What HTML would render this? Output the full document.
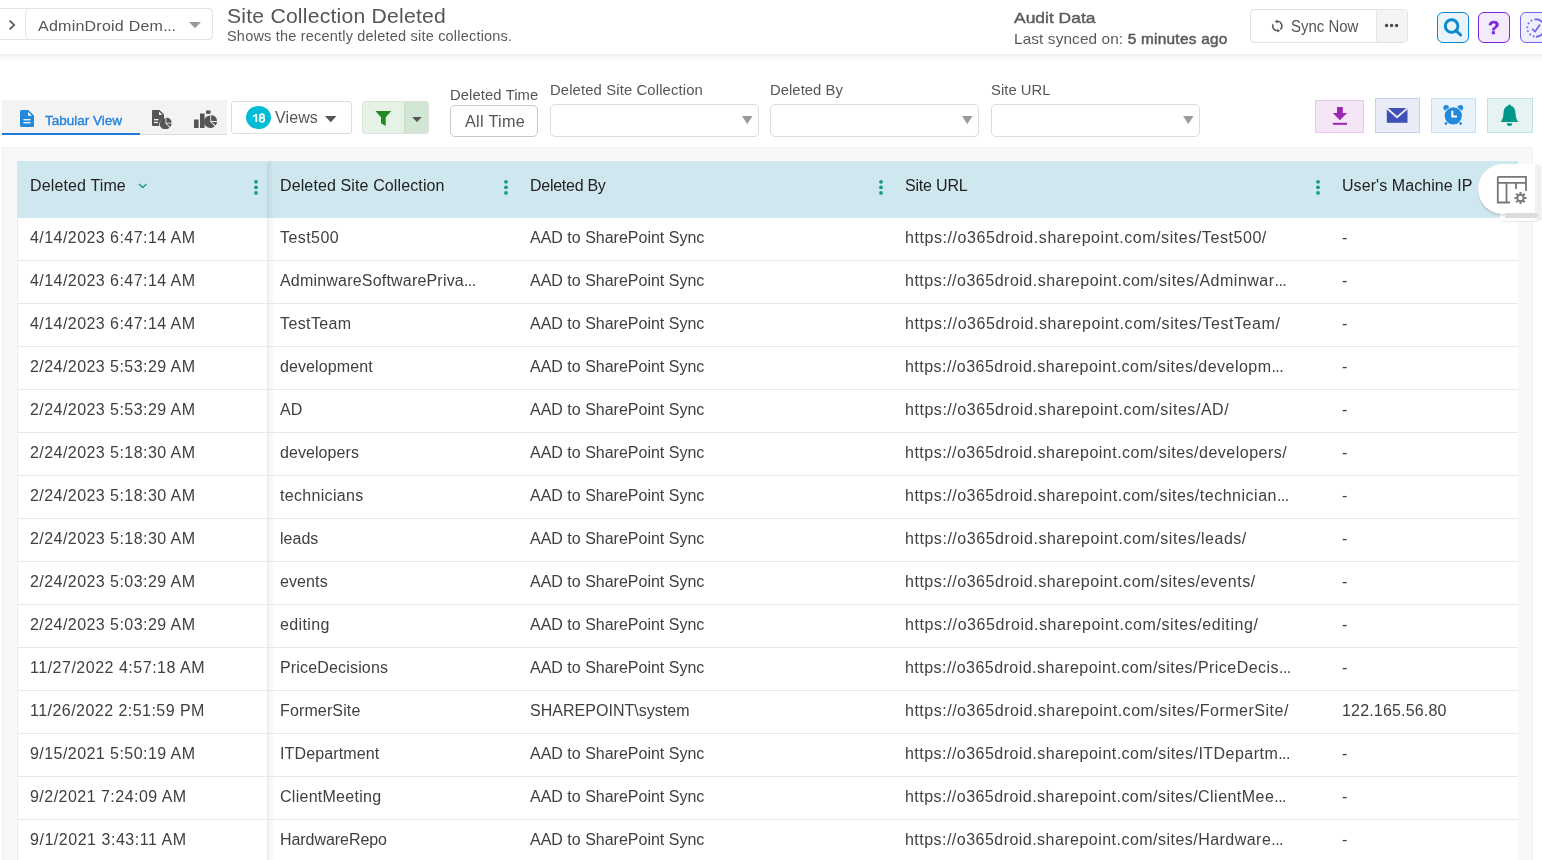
<!DOCTYPE html>
<html><head><meta charset="utf-8">
<style>
*{box-sizing:border-box;margin:0;padding:0}
html,body{width:1542px;height:860px;overflow:hidden;background:#fff;font-family:"Liberation Sans",sans-serif;color:#555}
.a{position:absolute}
.t{position:absolute;white-space:nowrap;line-height:1;will-change:transform}
</style></head><body>
<div class="a" style="left:0px;top:54px;width:1542px;height:8px;background:linear-gradient(#ebebeb,#f3f3f3 25%,#fafafa 60%,#fff)"></div>
<div class="a" style="left:-6px;top:8px;width:219px;height:32px;border:1px solid #e2e2e2;border-radius:4px"></div>
<div class="a" style="left:25px;top:8px;width:188px;height:32px;border:1px solid #e2e2e2;border-radius:5px;background:#fff"></div>
<svg class="a" style="left:7px;top:19px" width="10" height="12" viewBox="0 0 10 12"><path d="M2.6 1.6 L7.2 6 L2.6 10.4" stroke="#555" stroke-width="1.7" fill="none"/></svg>
<div class="t" style="left:38px;top:18.30px;font-size:15px;color:#555;letter-spacing:0.2px"><span style="display:inline-block;transform:scaleX(1.07);transform-origin:0 0">AdminDroid Dem<span style="letter-spacing:-0.3px">...</span></span></div>
<svg class="a" style="left:189px;top:22px" width="12" height="7" viewBox="0 0 12 7"><path d="M0 0H12L6 6.3Z" fill="#9a9a9a"/></svg>
<div class="t" style="left:227px;top:6.07px;font-size:20px;color:#555;letter-spacing:0.2px"><span style="display:inline-block;transform:scaleX(1.058);transform-origin:0 0">Site Collection Deleted</span></div>
<div class="t" style="left:227px;top:28.72px;font-size:14.5px;color:#5a5a5a;letter-spacing:0.2px">Shows the recently deleted site collections.</div>
<div class="t" style="left:1014px;top:9.68px;font-size:15.5px;color:#5a5a5a;-webkit-text-stroke:0.4px #5a5a5a"><span style="display:inline-block;transform:scaleX(1.125);transform-origin:0 0">Audit Data</span></div>
<div class="t" style="left:1014px;top:32.02px;font-size:14.5px;color:#5a5a5a;letter-spacing:0.1px"><span style="display:inline-block;transform:scaleX(1.06);transform-origin:0 0">Last synced on: <span style="-webkit-text-stroke:0.45px #555;letter-spacing:0.25px">5 minutes ago</span></span></div>
<div class="a" style="left:1250px;top:9px;width:158px;height:34px;border:1px solid #e2e2e2;border-radius:4px;background:#fff"></div>
<div class="a" style="left:1376px;top:10px;width:31px;height:32px;background:#f4f4f4;border-left:1px solid #e6e6e6;border-radius:0 3px 3px 0"></div>
<svg class="a" style="left:1271px;top:19px" width="13" height="15" viewBox="0 0 13 15"><path d="M5.9 2.42A4.6 4.6 0 0 1 9.26 10.52" stroke="#555" stroke-width="1.45" fill="none"/><path d="M3.7 2.6L6.7 0.8V4.4Z" fill="#555"/><path d="M2.03 5.28A4.6 4.6 0 0 0 6.62 11.59" stroke="#555" stroke-width="1.45" fill="none"/><path d="M9.2 11.7L6.2 9.9V13.5Z" fill="#555"/></svg>
<div class="t" style="left:1291px;top:19.45px;font-size:16px;color:#555"><span style="display:inline-block;transform:scaleX(0.935);transform-origin:0 0">Sync Now</span></div>
<svg class="a" style="left:1384px;top:22px" width="15" height="7" viewBox="0 0 15 7"><circle cx="2.6" cy="3.5" r="1.65" fill="#444"/><circle cx="7.6" cy="3.5" r="1.65" fill="#444"/><circle cx="12.6" cy="3.5" r="1.65" fill="#444"/></svg>
<div class="a" style="left:1437px;top:12px;width:32px;height:31px;border:1.6px solid #0a88d2;border-radius:6px;background:#e8f3fa"></div>
<svg class="a" style="left:1443px;top:17px" width="20" height="20" viewBox="0 0 20 20"><circle cx="8.6" cy="9.1" r="6.3" stroke="#0a88d2" stroke-width="2.9" fill="none"/><path d="M13.3 13.9 L17.6 18" stroke="#0a88d2" stroke-width="3" stroke-linecap="round"/></svg>
<div class="a" style="left:1478px;top:12px;width:32px;height:31px;border:1.6px solid #7a24dc;border-radius:6px;background:#f3ebfc"></div>
<div class="t" style="left:1488px;top:17.51px;font-size:19px;color:#7a24dc;font-weight:bold;-webkit-text-stroke:0.4px #7a24dc">?</div>
<div class="a" style="left:1520px;top:12px;width:32px;height:31px;border:1.6px solid #6e66ee;border-radius:6px;background:#f0effd"></div>
<svg class="a" style="left:1526px;top:18.3px" width="20" height="20" viewBox="0 0 20 20"><path d="M10 1.3A8.7 8.7 0 0 0 10 18.7" stroke="#6e66ee" stroke-width="1.7" fill="none" stroke-dasharray="1.7 2.3"/><path d="M10 1.3A8.7 8.7 0 0 1 18.7 10" stroke="#6e66ee" stroke-width="1.9" fill="none"/><path d="M10 18.7A8.7 8.7 0 0 0 17 15" stroke="#6e66ee" stroke-width="1.9" fill="none"/><path d="M6 10.9 L9.1 13.6 L14 6.5" stroke="#6e66ee" stroke-width="1.7" fill="none"/></svg>
<div class="a" style="left:2px;top:100px;width:225px;height:35px;background:#f3f3f3"></div>
<div class="a" style="left:140px;top:134px;width:87px;height:1px;background:#dcdcdc"></div>
<div class="a" style="left:2px;top:133px;width:138px;height:2px;background:#1e7ad6"></div>
<svg class="a" style="left:20px;top:110px" width="14" height="17" viewBox="0 0 14 17"><path d="M1.5 0H8.3L14 5.6V15.5Q14 17 12.5 17H1.5Q0 17 0 15.5V1.5Q0 0 1.5 0Z" fill="#2389dd"/><path d="M8 1.8V5.8H12Z" fill="#f3f3f3"/><rect x="3.5" y="9" width="7" height="1.4" fill="#f3f3f3"/><rect x="3.5" y="12" width="7" height="1.4" fill="#f3f3f3"/></svg>
<div class="t" style="left:45px;top:113.57px;font-size:13.5px;color:#1f80dc;-webkit-text-stroke:0.35px #1f80dc">Tabular View</div>
<svg class="a" style="left:152px;top:110px" width="20" height="19" viewBox="0 0 20 19"><path d="M1 0H7.5L12 4.5V8.8A6 6 0 0 0 7.2 16H1Q0 16 0 15V1Q0 0 1 0Z" fill="#555"/><path d="M7 1.5V5H10.5Z" fill="#f3f3f3"/><rect x="2" y="9" width="4.5" height="1.3" fill="#f3f3f3"/><rect x="2" y="11.8" width="4" height="1.3" fill="#f3f3f3"/><path d="M13.5 13.5V8.2A5.6 5.6 0 1 0 17.5 17.5Z" fill="#555"/><path d="M14.3 7.5A5.6 5.6 0 0 1 19.6 12.7H14.3Z" fill="#555"/><path d="M14.6 13.6H19.6A5.6 5.6 0 0 1 18.3 17Z" fill="#555"/></svg>
<svg class="a" style="left:193px;top:109.8px" width="26" height="19" viewBox="0 0 26 19"><rect x="1" y="9.5" width="4.6" height="8.5" fill="#555"/><rect x="7" y="3.5" width="4.6" height="14.5" fill="#555"/><rect x="13" y="0.5" width="4.6" height="3.3" fill="#555"/><path d="M17.3 11.8V5.6A6.2 6.2 0 1 0 21.6 16.2Z" fill="#555"/><path d="M18.2 5A6.2 6.2 0 0 1 24 10.9H18.2Z" fill="#555"/><path d="M18.6 11.9H24A6.2 6.2 0 0 1 22.5 15.6Z" fill="#555"/></svg>
<div class="a" style="left:231px;top:101px;width:121px;height:33px;border:1px solid #dedede;border-radius:3px;background:#fff"></div>
<div class="a" style="left:246px;top:105.5px;width:25px;height:23px;border-radius:50%;background:#00bcd6"></div>
<svg class="a" style="left:252px;top:113px" width="15" height="10" viewBox="0 0 15 10"><path d="M0.9 2.4L3.7 0.9H5.2V9H3.4V3.1L0.9 4.2Z" fill="#fff"/><ellipse cx="10" cy="3" rx="2" ry="1.85" stroke="#fff" stroke-width="1.7" fill="none"/><ellipse cx="10" cy="6.75" rx="2.35" ry="2.05" stroke="#fff" stroke-width="1.7" fill="none"/></svg>
<div class="t" style="left:275px;top:110.45px;font-size:16px;color:#555;letter-spacing:0.1px">Views</div>
<svg class="a" style="left:325px;top:116px" width="12" height="7" viewBox="0 0 12 7"><path d="M0 0H11.5L5.75 6.2Z" fill="#555"/></svg>
<div class="a" style="left:362px;top:101px;width:67px;height:33px;background:#e5f2e5;border-radius:3px;border:1px solid #dde2dd"></div>
<div class="a" style="left:404px;top:102px;width:24px;height:31px;background:#d2e7d3;border-radius:0 2px 2px 0;border-left:1px solid #c9dcca"></div>
<svg class="a" style="left:374px;top:110px" width="18" height="17" viewBox="0 0 18 17"><path d="M1.4 1.1H17.3L11.7 7.2V16L7 13.2V7.2Z" fill="#228a22"/></svg>
<svg class="a" style="left:411px;top:116px" width="12" height="7" viewBox="0 0 12 7"><path d="M1.1 0.9H10.9L6 5.9Z" fill="#555"/></svg>
<div class="t" style="left:450px;top:88.47px;font-size:14.8px;color:#555;letter-spacing:0.1px">Deleted Time</div>
<div class="a" style="left:450px;top:105px;width:88px;height:32px;border:1px solid #c8c8c8;border-radius:5px;background:#fff"></div>
<div class="t" style="left:465px;top:113.29px;font-size:16.2px;color:#555;letter-spacing:0.3px">All Time</div>
<div class="t" style="left:550px;top:83.47px;font-size:14.8px;color:#555;letter-spacing:0.14px">Deleted Site Collection</div>
<div class="a" style="left:550px;top:104px;width:209px;height:33px;border:1px solid #dcdcdc;border-radius:5px;background:#fff"></div>
<svg class="a" style="left:742px;top:116px" width="11" height="8" viewBox="0 0 11 8"><path d="M0 0H10.5L5.25 8Z" fill="#9a9a9a"/></svg>
<div class="t" style="left:770.3px;top:83.47px;font-size:14.8px;color:#555;letter-spacing:0.05px">Deleted By</div>
<div class="a" style="left:770px;top:104px;width:209px;height:33px;border:1px solid #dcdcdc;border-radius:5px;background:#fff"></div>
<svg class="a" style="left:962px;top:116px" width="11" height="8" viewBox="0 0 11 8"><path d="M0 0H10.5L5.25 8Z" fill="#9a9a9a"/></svg>
<div class="t" style="left:990.5px;top:83.47px;font-size:14.8px;color:#555;letter-spacing:0.05px">Site URL</div>
<div class="a" style="left:991px;top:104px;width:209px;height:33px;border:1px solid #dcdcdc;border-radius:5px;background:#fff"></div>
<svg class="a" style="left:1183px;top:116px" width="11" height="8" viewBox="0 0 11 8"><path d="M0 0H10.5L5.25 8Z" fill="#9a9a9a"/></svg>
<div class="a" style="left:1315px;top:100px;width:49px;height:33px;background:#f5e6f7;border:1px solid #e9c8ee"></div>
<svg class="a" style="left:1332px;top:106px" width="16" height="20" viewBox="0 0 16 20"><path d="M5 1H10.8V7H15L7.9 14.2L0.8 7H5Z" fill="#9c27b0"/><rect x="0.8" y="16.8" width="14.2" height="2" fill="#9c27b0"/></svg>
<div class="a" style="left:1375px;top:98px;width:45px;height:35px;background:#e9ebf6;border:1px solid #cbcfec"></div>
<svg class="a" style="left:1386px;top:107px" width="22" height="17" viewBox="0 0 22 17"><path d="M0.8 1H21.5V15.8H0.8Z" fill="#3f51b5"/><path d="M0.8 1.2L11.1 10.2L21.5 1.2" stroke="#e9ebf6" stroke-width="1.9" fill="none"/></svg>
<div class="a" style="left:1431px;top:98px;width:45px;height:35px;background:#e8f2fb;border:1px solid #c6e0f4"></div>
<svg class="a" style="left:1443px;top:104px" width="21" height="22" viewBox="0 0 21 22"><circle cx="3.2" cy="3.8" r="2.8" fill="#2389dd"/><circle cx="17.4" cy="3.8" r="2.8" fill="#2389dd"/><circle cx="10.3" cy="11.8" r="9.4" fill="#e8f2fb"/><circle cx="10.3" cy="11.8" r="8.6" fill="#2389dd"/><circle cx="10.3" cy="11.6" r="7.2" fill="none" stroke="#e8f2fb" stroke-width="0"/><path d="M3.8 18.5L2.2 20.5M16.8 18.5L18.4 20.5" stroke="#2389dd" stroke-width="2.2"/><path d="M9.3 6.8V12.4H14" stroke="#fff" stroke-width="2" fill="none"/></svg>
<div class="a" style="left:1487px;top:98px;width:46px;height:35px;background:#e5f3f2;border:1px solid #c0e1dd"></div>
<svg class="a" style="left:1499px;top:103.6px" width="21" height="24" viewBox="0 0 21 24"><path d="M10.5 0.5C11.3 0.5 11.7 1 11.8 1.8C15.2 2.6 16.3 5.6 16.5 9C16.7 13 17.2 15 19.3 18H1.7C3.8 15 4.3 13 4.5 9C4.7 5.6 5.8 2.6 9.2 1.8C9.3 1 9.7 0.5 10.5 0.5Z" fill="#00968a"/><path d="M7.8 19.3H13.2A2.7 2.7 0 0 1 7.8 19.3Z" fill="#00968a"/></svg>
<div class="a" style="left:2px;top:147px;width:1531px;height:713px;background:#f7f8f9;border-top:1px solid #f0f1f1;border-left:1px solid #f0f1f1;border-right:1px solid #f0f1f1"></div>
<div class="a" style="left:17px;top:161px;width:1501px;height:57px;background:#cfe7ee"></div>
<div class="a" style="left:17px;top:218px;width:1501px;height:642px;background:#fff"></div>
<div class="a" style="left:17px;top:218px;width:1px;height:642px;background:#ececec"></div>
<div class="a" style="left:268px;top:161px;width:6px;height:699px;background:linear-gradient(90deg,rgba(0,0,0,0.06),rgba(0,0,0,0))"></div>
<div class="a" style="left:267px;top:163px;width:1px;height:697px;background:rgba(0,0,0,0.07)"></div>
<div class="t" style="left:30px;top:178.45px;font-size:16px;color:#222;letter-spacing:0.136px">Deleted Time</div>
<div class="t" style="left:280px;top:178.45px;font-size:16px;color:#222;letter-spacing:0.118px">Deleted Site Collection</div>
<div class="t" style="left:530px;top:178.45px;font-size:16px;color:#222;letter-spacing:-0.267px">Deleted By</div>
<div class="t" style="left:905px;top:178.45px;font-size:16px;color:#222;letter-spacing:-0.186px">Site URL</div>
<div class="t" style="left:1342px;top:178.45px;font-size:16px;color:#222;letter-spacing:0.069px">User's Machine IP</div>
<svg class="a" style="left:137px;top:182px" width="11" height="8" viewBox="0 0 11 8"><path d="M2 1.9L5.7 5.6L9.4 1.9" stroke="#16978c" stroke-width="1.35" fill="none"/></svg>
<svg class="a" style="left:253.2px;top:178px" width="6" height="18" viewBox="0 0 6 18"><circle cx="3" cy="3.8" r="1.9" fill="#16978c"/><circle cx="3" cy="9.3" r="1.9" fill="#16978c"/><circle cx="3" cy="14.9" r="1.9" fill="#16978c"/></svg>
<svg class="a" style="left:503.2px;top:178px" width="6" height="18" viewBox="0 0 6 18"><circle cx="3" cy="3.8" r="1.9" fill="#16978c"/><circle cx="3" cy="9.3" r="1.9" fill="#16978c"/><circle cx="3" cy="14.9" r="1.9" fill="#16978c"/></svg>
<svg class="a" style="left:878.2px;top:178px" width="6" height="18" viewBox="0 0 6 18"><circle cx="3" cy="3.8" r="1.9" fill="#16978c"/><circle cx="3" cy="9.3" r="1.9" fill="#16978c"/><circle cx="3" cy="14.9" r="1.9" fill="#16978c"/></svg>
<svg class="a" style="left:1315.2px;top:178px" width="6" height="18" viewBox="0 0 6 18"><circle cx="3" cy="3.8" r="1.9" fill="#16978c"/><circle cx="3" cy="9.3" r="1.9" fill="#16978c"/><circle cx="3" cy="14.9" r="1.9" fill="#16978c"/></svg>
<div class="a" style="left:17px;top:260px;width:1501px;height:1px;background:#e8e8e8"></div>
<div class="t" style="left:30px;top:230.45px;font-size:16px;color:#404040;letter-spacing:0.447px">4/14/2023 6:47:14 AM</div>
<div class="t" style="left:280px;top:230.45px;font-size:16px;color:#404040;letter-spacing:0.433px">Test500</div>
<div class="t" style="left:530px;top:230.45px;font-size:16px;color:#404040;letter-spacing:0.000px">AAD to SharePoint Sync</div>
<div class="t" style="left:905px;top:230.45px;font-size:16px;color:#404040;letter-spacing:0.565px">https://o365droid.sharepoint.com/sites/Test500/</div>
<div class="t" style="left:1342px;top:230.45px;font-size:16px;color:#404040;letter-spacing:0.000px">-</div>
<div class="a" style="left:17px;top:303px;width:1501px;height:1px;background:#e8e8e8"></div>
<div class="t" style="left:30px;top:273.45px;font-size:16px;color:#404040;letter-spacing:0.447px">4/14/2023 6:47:14 AM</div>
<div class="t" style="left:280px;top:273.45px;font-size:16px;color:#404040;letter-spacing:0.196px">AdminwareSoftwarePriva<span style="letter-spacing:-0.6px">...</span></div>
<div class="t" style="left:530px;top:273.45px;font-size:16px;color:#404040;letter-spacing:0.000px">AAD to SharePoint Sync</div>
<div class="t" style="left:905px;top:273.45px;font-size:16px;color:#404040;letter-spacing:0.503px">https://o365droid.sharepoint.com/sites/Adminwar<span style="letter-spacing:-0.6px">...</span></div>
<div class="t" style="left:1342px;top:273.45px;font-size:16px;color:#404040;letter-spacing:0.000px">-</div>
<div class="a" style="left:17px;top:346px;width:1501px;height:1px;background:#e8e8e8"></div>
<div class="t" style="left:30px;top:316.45px;font-size:16px;color:#404040;letter-spacing:0.447px">4/14/2023 6:47:14 AM</div>
<div class="t" style="left:280px;top:316.45px;font-size:16px;color:#404040;letter-spacing:0.386px">TestTeam</div>
<div class="t" style="left:530px;top:316.45px;font-size:16px;color:#404040;letter-spacing:0.000px">AAD to SharePoint Sync</div>
<div class="t" style="left:905px;top:316.45px;font-size:16px;color:#404040;letter-spacing:0.578px">https://o365droid.sharepoint.com/sites/TestTeam/</div>
<div class="t" style="left:1342px;top:316.45px;font-size:16px;color:#404040;letter-spacing:0.000px">-</div>
<div class="a" style="left:17px;top:389px;width:1501px;height:1px;background:#e8e8e8"></div>
<div class="t" style="left:30px;top:359.45px;font-size:16px;color:#404040;letter-spacing:0.447px">2/24/2023 5:53:29 AM</div>
<div class="t" style="left:280px;top:359.45px;font-size:16px;color:#404040;letter-spacing:0.100px">development</div>
<div class="t" style="left:530px;top:359.45px;font-size:16px;color:#404040;letter-spacing:0.000px">AAD to SharePoint Sync</div>
<div class="t" style="left:905px;top:359.45px;font-size:16px;color:#404040;letter-spacing:0.474px">https://o365droid.sharepoint.com/sites/developm<span style="letter-spacing:-0.6px">...</span></div>
<div class="t" style="left:1342px;top:359.45px;font-size:16px;color:#404040;letter-spacing:0.000px">-</div>
<div class="a" style="left:17px;top:432px;width:1501px;height:1px;background:#e8e8e8"></div>
<div class="t" style="left:30px;top:402.45px;font-size:16px;color:#404040;letter-spacing:0.447px">2/24/2023 5:53:29 AM</div>
<div class="t" style="left:280px;top:402.45px;font-size:16px;color:#404040;letter-spacing:0.100px">AD</div>
<div class="t" style="left:530px;top:402.45px;font-size:16px;color:#404040;letter-spacing:0.000px">AAD to SharePoint Sync</div>
<div class="t" style="left:905px;top:402.45px;font-size:16px;color:#404040;letter-spacing:0.540px">https://o365droid.sharepoint.com/sites/AD/</div>
<div class="t" style="left:1342px;top:402.45px;font-size:16px;color:#404040;letter-spacing:0.000px">-</div>
<div class="a" style="left:17px;top:475px;width:1501px;height:1px;background:#e8e8e8"></div>
<div class="t" style="left:30px;top:445.45px;font-size:16px;color:#404040;letter-spacing:0.447px">2/24/2023 5:18:30 AM</div>
<div class="t" style="left:280px;top:445.45px;font-size:16px;color:#404040;letter-spacing:0.067px">developers</div>
<div class="t" style="left:530px;top:445.45px;font-size:16px;color:#404040;letter-spacing:0.000px">AAD to SharePoint Sync</div>
<div class="t" style="left:905px;top:445.45px;font-size:16px;color:#404040;letter-spacing:0.493px">https://o365droid.sharepoint.com/sites/developers/</div>
<div class="t" style="left:1342px;top:445.45px;font-size:16px;color:#404040;letter-spacing:0.000px">-</div>
<div class="a" style="left:17px;top:518px;width:1501px;height:1px;background:#e8e8e8"></div>
<div class="t" style="left:30px;top:488.45px;font-size:16px;color:#404040;letter-spacing:0.447px">2/24/2023 5:18:30 AM</div>
<div class="t" style="left:280px;top:488.45px;font-size:16px;color:#404040;letter-spacing:0.320px">technicians</div>
<div class="t" style="left:530px;top:488.45px;font-size:16px;color:#404040;letter-spacing:0.000px">AAD to SharePoint Sync</div>
<div class="t" style="left:905px;top:488.45px;font-size:16px;color:#404040;letter-spacing:0.513px">https://o365droid.sharepoint.com/sites/technician<span style="letter-spacing:-0.6px">...</span></div>
<div class="t" style="left:1342px;top:488.45px;font-size:16px;color:#404040;letter-spacing:0.000px">-</div>
<div class="a" style="left:17px;top:561px;width:1501px;height:1px;background:#e8e8e8"></div>
<div class="t" style="left:30px;top:531.45px;font-size:16px;color:#404040;letter-spacing:0.447px">2/24/2023 5:18:30 AM</div>
<div class="t" style="left:280px;top:531.45px;font-size:16px;color:#404040;letter-spacing:0.025px">leads</div>
<div class="t" style="left:530px;top:531.45px;font-size:16px;color:#404040;letter-spacing:0.000px">AAD to SharePoint Sync</div>
<div class="t" style="left:905px;top:531.45px;font-size:16px;color:#404040;letter-spacing:0.541px">https://o365droid.sharepoint.com/sites/leads/</div>
<div class="t" style="left:1342px;top:531.45px;font-size:16px;color:#404040;letter-spacing:0.000px">-</div>
<div class="a" style="left:17px;top:604px;width:1501px;height:1px;background:#e8e8e8"></div>
<div class="t" style="left:30px;top:574.45px;font-size:16px;color:#404040;letter-spacing:0.447px">2/24/2023 5:03:29 AM</div>
<div class="t" style="left:280px;top:574.45px;font-size:16px;color:#404040;letter-spacing:0.100px">events</div>
<div class="t" style="left:530px;top:574.45px;font-size:16px;color:#404040;letter-spacing:0.000px">AAD to SharePoint Sync</div>
<div class="t" style="left:905px;top:574.45px;font-size:16px;color:#404040;letter-spacing:0.528px">https://o365droid.sharepoint.com/sites/events/</div>
<div class="t" style="left:1342px;top:574.45px;font-size:16px;color:#404040;letter-spacing:0.000px">-</div>
<div class="a" style="left:17px;top:647px;width:1501px;height:1px;background:#e8e8e8"></div>
<div class="t" style="left:30px;top:617.45px;font-size:16px;color:#404040;letter-spacing:0.447px">2/24/2023 5:03:29 AM</div>
<div class="t" style="left:280px;top:617.45px;font-size:16px;color:#404040;letter-spacing:0.383px">editing</div>
<div class="t" style="left:530px;top:617.45px;font-size:16px;color:#404040;letter-spacing:0.000px">AAD to SharePoint Sync</div>
<div class="t" style="left:905px;top:617.45px;font-size:16px;color:#404040;letter-spacing:0.576px">https://o365droid.sharepoint.com/sites/editing/</div>
<div class="t" style="left:1342px;top:617.45px;font-size:16px;color:#404040;letter-spacing:0.000px">-</div>
<div class="a" style="left:17px;top:690px;width:1501px;height:1px;background:#e8e8e8"></div>
<div class="t" style="left:30px;top:660.45px;font-size:16px;color:#404040;letter-spacing:0.510px">11/27/2022 4:57:18 AM</div>
<div class="t" style="left:280px;top:660.45px;font-size:16px;color:#404040;letter-spacing:0.169px">PriceDecisions</div>
<div class="t" style="left:530px;top:660.45px;font-size:16px;color:#404040;letter-spacing:0.000px">AAD to SharePoint Sync</div>
<div class="t" style="left:905px;top:660.45px;font-size:16px;color:#404040;letter-spacing:0.464px">https://o365droid.sharepoint.com/sites/PriceDecis<span style="letter-spacing:-0.6px">...</span></div>
<div class="t" style="left:1342px;top:660.45px;font-size:16px;color:#404040;letter-spacing:0.000px">-</div>
<div class="a" style="left:17px;top:733px;width:1501px;height:1px;background:#e8e8e8"></div>
<div class="t" style="left:30px;top:703.45px;font-size:16px;color:#404040;letter-spacing:0.460px">11/26/2022 2:51:59 PM</div>
<div class="t" style="left:280px;top:703.45px;font-size:16px;color:#404040;letter-spacing:0.133px">FormerSite</div>
<div class="t" style="left:530px;top:703.45px;font-size:16px;color:#404040;letter-spacing:0.025px">SHAREPOINT\system</div>
<div class="t" style="left:905px;top:703.45px;font-size:16px;color:#404040;letter-spacing:0.511px">https://o365droid.sharepoint.com/sites/FormerSite/</div>
<div class="t" style="left:1342px;top:703.45px;font-size:16px;color:#404040;letter-spacing:0.175px">122.165.56.80</div>
<div class="a" style="left:17px;top:776px;width:1501px;height:1px;background:#e8e8e8"></div>
<div class="t" style="left:30px;top:746.45px;font-size:16px;color:#404040;letter-spacing:0.447px">9/15/2021 5:50:19 AM</div>
<div class="t" style="left:280px;top:746.45px;font-size:16px;color:#404040;letter-spacing:0.127px">ITDepartment</div>
<div class="t" style="left:530px;top:746.45px;font-size:16px;color:#404040;letter-spacing:0.000px">AAD to SharePoint Sync</div>
<div class="t" style="left:905px;top:746.45px;font-size:16px;color:#404040;letter-spacing:0.476px">https://o365droid.sharepoint.com/sites/ITDepartm<span style="letter-spacing:-0.6px">...</span></div>
<div class="t" style="left:1342px;top:746.45px;font-size:16px;color:#404040;letter-spacing:0.000px">-</div>
<div class="a" style="left:17px;top:819px;width:1501px;height:1px;background:#e8e8e8"></div>
<div class="t" style="left:30px;top:789.45px;font-size:16px;color:#404040;letter-spacing:0.472px">9/2/2021 7:24:09 AM</div>
<div class="t" style="left:280px;top:789.45px;font-size:16px;color:#404040;letter-spacing:0.267px">ClientMeeting</div>
<div class="t" style="left:530px;top:789.45px;font-size:16px;color:#404040;letter-spacing:0.000px">AAD to SharePoint Sync</div>
<div class="t" style="left:905px;top:789.45px;font-size:16px;color:#404040;letter-spacing:0.468px">https://o365droid.sharepoint.com/sites/ClientMee<span style="letter-spacing:-0.6px">...</span></div>
<div class="t" style="left:1342px;top:789.45px;font-size:16px;color:#404040;letter-spacing:0.000px">-</div>
<div class="t" style="left:30px;top:832.45px;font-size:16px;color:#404040;letter-spacing:0.528px">9/1/2021 3:43:11 AM</div>
<div class="t" style="left:280px;top:832.45px;font-size:16px;color:#404040;letter-spacing:-0.055px">HardwareRepo</div>
<div class="t" style="left:530px;top:832.45px;font-size:16px;color:#404040;letter-spacing:0.000px">AAD to SharePoint Sync</div>
<div class="t" style="left:905px;top:832.45px;font-size:16px;color:#404040;letter-spacing:0.470px">https://o365droid.sharepoint.com/sites/Hardware<span style="letter-spacing:-0.6px">...</span></div>
<div class="t" style="left:1342px;top:832.45px;font-size:16px;color:#404040;letter-spacing:0.000px">-</div>
<div class="a" style="left:1500px;top:164px;width:41.5px;height:57px;border-radius:0 8px 8px 0;background:linear-gradient(90deg,#fff 0,#fff 80%,#ececec 92%,#f6f6f6);box-shadow:0.5px 0.5px 1px rgba(0,0,0,0.08)"></div>
<div class="a" style="left:1478px;top:164px;width:57px;height:50px;border-radius:25px 0 0 25px;background:#fff;box-shadow:0 2px 2px rgba(0,0,0,0.13)"></div>
<div class="a" style="left:1505px;top:213px;width:33px;height:4.5px;border-radius:0 3px 3px 0;background:#dcdcdc"></div>
<svg class="a" style="left:1496px;top:175px" width="32" height="30" viewBox="0 0 32 30"><path d="M1.8 1.8H30V16M1.8 1.8V27.5H14M1.8 7.8H30M10.5 7.8V27.5M20 7.8V14" stroke="#777" stroke-width="1.8" fill="none"/><circle cx="24.5" cy="23" r="3.2" stroke="#777" stroke-width="2" fill="none"/><path d="M24.5 17V19.3M24.5 26.7V29M18.5 23H20.8M28.2 23H30.5M20.3 18.8L21.9 20.4M27.1 25.6L28.7 27.2M20.3 27.2L21.9 25.6M27.1 20.4L28.7 18.8" stroke="#777" stroke-width="2"/></svg>
</body></html>
